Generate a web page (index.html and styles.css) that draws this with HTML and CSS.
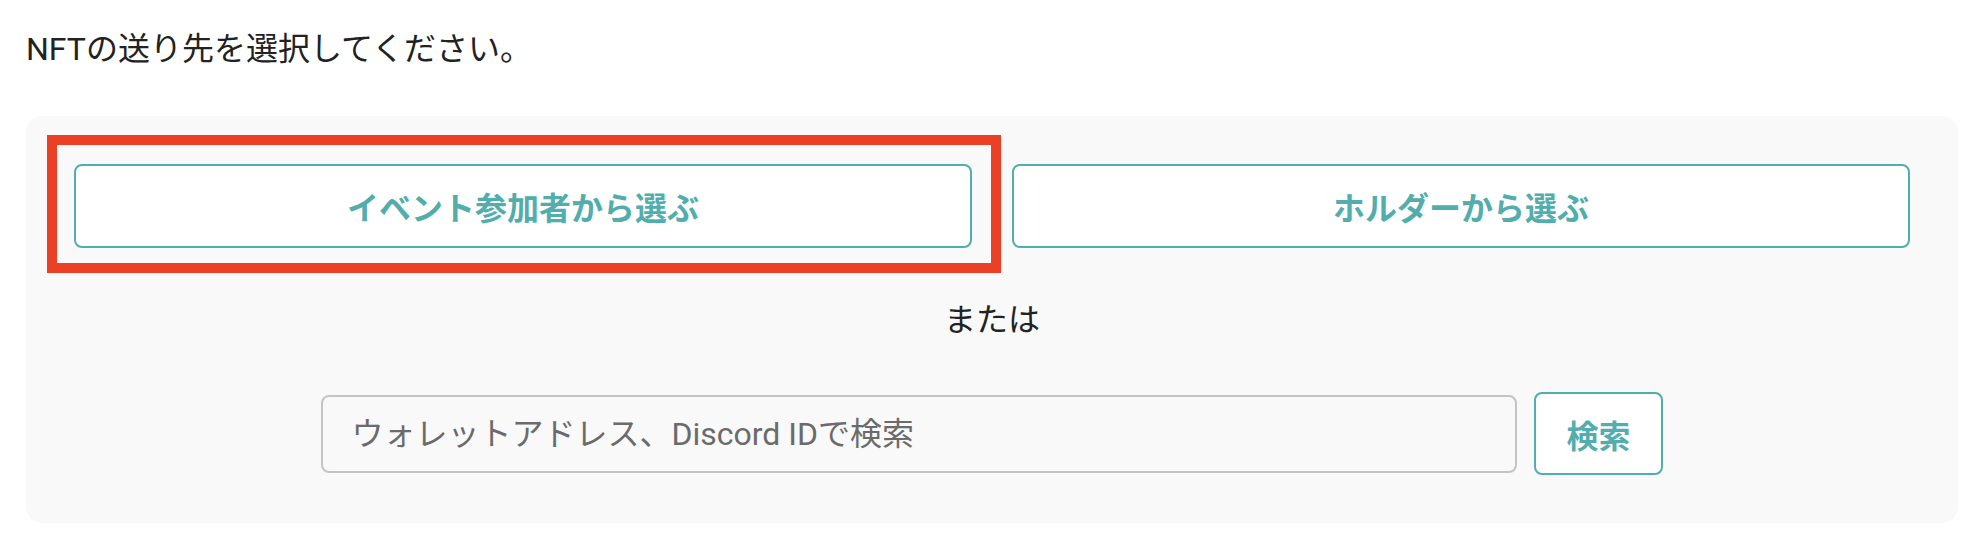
FILE: index.html
```html
<!DOCTYPE html>
<html lang="ja">
<head>
<meta charset="utf-8">
<title>NFT送り先選択</title>
<link rel="stylesheet" href="styles.css">
</head>
<body>
<main class="page">
  <p class="lead">NFTの送り先を選択してください。</p>
  <section class="panel">
    <div class="choices">
      <div class="highlight">
        <button class="choice-btn" type="button">イベント参加者から選ぶ</button>
        <span class="annot" aria-hidden="true"></span>
      </div>
      <button class="choice-btn" type="button">ホルダーから選ぶ</button>
    </div>
    <p class="or">または</p>
    <div class="search-row">
      <input class="search-input" type="text" placeholder="ウォレットアドレス、Discord IDで検索">
      <button class="search-btn" type="button">検索</button>
    </div>
  </section>
</main>
</body>
</html>
```

FILE: styles.css
```css
* { box-sizing: border-box; }

html, body {
  margin: 0;
  background: #ffffff;
}

body {
  font-family: Roboto, "Noto Sans CJK JP", sans-serif;
  color: #222222;
}

.page {
  padding: 25px 22px 0 26px;
}

.lead {
  margin: 0 0 43px;
  font-size: 32px;
  line-height: 48px;
  color: #222222;
}

.panel {
  background: #f9f9f9;
  border-radius: 16px;
  padding: 48px;
}

.choices {
  display: grid;
  grid-template-columns: 1fr 1fr;
  gap: 40px;
}

.highlight {
  position: relative;
  display: flex;
}

.choice-btn {
  width: 100%;
  height: 84px;
  background: #ffffff;
  border: 2px solid #52adad;
  border-radius: 8px;
  color: #52adad;
  font-family: Roboto, "Noto Sans CJK JP", sans-serif;
  font-weight: 700;
  font-size: 32px;
  cursor: pointer;
}

.annot {
  position: absolute;
  top: -29px;
  left: -27px;
  right: -29px;
  bottom: -25px;
  border: 10px solid #e94026;
  pointer-events: none;
}

.or {
  margin: 48px 0;
  text-align: center;
  font-size: 32px;
  line-height: 48px;
  color: #222222;
}

.search-row {
  display: flex;
  justify-content: center;
  align-items: center;
  gap: 17px;
}

.search-input {
  width: 1196px;
  height: 78px;
  padding: 0 28px;
  background: transparent;
  border: 2px solid #c4c4c4;
  border-radius: 8px;
  font-family: Roboto, "Noto Sans CJK JP", sans-serif;
  font-size: 32px;
  color: #222222;
  outline: none;
}

.search-input::placeholder {
  color: #6b6b6b;
  opacity: 1;
}

.search-btn {
  height: 83px;
  padding: 0 30px;
  background: #ffffff;
  border: 2px solid #52adad;
  border-radius: 8px;
  color: #52adad;
  font-family: Roboto, "Noto Sans CJK JP", sans-serif;
  font-weight: 700;
  font-size: 32px;
  cursor: pointer;
}
```
